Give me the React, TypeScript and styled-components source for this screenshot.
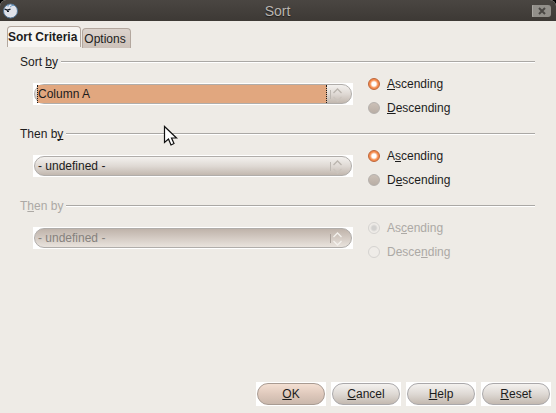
import React, { type ReactNode } from "react";
import styled, { createGlobalStyle, css } from "styled-components";

const GlobalStyle = createGlobalStyle`
  * { box-sizing: border-box; }
  body {
    margin: 0;
    background: #000;
    color: #1c1c1c;
    font: 12px/16px "Liberation Sans", Arial, sans-serif;
  }
`;

const Dialog = styled.div`
  position: relative;
  display: flex;
  flex-direction: column;
  min-height: 100vh;
  background: #eeebe6;
  border-radius: 6px 6px 0 0;
  overflow: hidden;
`;

const TitleBar = styled.header`
  display: grid;
  grid-template-columns: 20px 1fr 20px;
  align-items: center;
  height: 21px;
  padding: 0 4px 0 3px;
  background: linear-gradient(#4a4642, #3d3935);
`;

const Title = styled.h1`
  margin: 0;
  text-align: center;
  font-size: 14px;
  line-height: 20px;
  font-weight: normal;
  color: #b9b5b0;
  text-shadow: 0 1px 1px #1d1b19;
  padding-top: 1px;
`;

const AppIcon = styled.svg`
  width: 16px;
  height: 16px;
`;

const CloseButton = styled.button`
  width: 19px;
  height: 12px;
  padding: 0;
  border: 0;
  border-radius: 1px 3px 3px 1px;
  background: #928f8a;
  box-shadow: inset 1px 0 #aaa7a2;
  display: grid;
  place-items: center;
`;

const Tabs = styled.div`
  display: flex;
  align-items: flex-start;
  gap: 1px;
  padding: 5px 7px 0;
`;

const Tab = styled.button<{ $active?: boolean }>`
  height: 20px;
  margin: 2px 0 0;
  padding: 0 4px 0 1px;
  border: 1px solid #b3a79e;
  border-bottom: 0;
  border-radius: 4px 4px 0 0;
  font: inherit;
  white-space: nowrap;
  color: #1c1c1c;
  background: linear-gradient(#dcd3cc, #cdc2ba);
  ${(p) =>
    p.$active &&
    css`
      height: 21px;
      margin: 0;
      padding: 0 3px 0 0;
      font-weight: bold;
      background: #f7f5f2;
    `}
`;

const Panel = styled.main`
  display: flex;
  flex-direction: column;
  padding: 6px 21px 12px 20px;
`;

const Group = styled.fieldset<{ $off?: boolean }>`
  min-width: 0;
  height: 72px;
  margin: 0;
  padding: 0;
  border: 0;
  color: ${(p) => (p.$off ? "#aca9a5" : "#1c1c1c")};
`;

const Legend = styled.legend`
  display: flex;
  align-items: center;
  gap: 3px;
  width: 100%;
  padding: 0;
  white-space: nowrap;

  &::after {
    content: "";
    flex: 1;
    height: 2px;
    background: linear-gradient(#aaa8a5 50%, #fff 50%);
  }
`;

const Key = styled.span`
  text-decoration: underline 1px;
  text-decoration-skip-ink: none;
  text-underline-offset: 1px;
`;

const Fields = styled.div`
  display: grid;
  grid-template-columns: minmax(0, 320px) 1fr;
  gap: 15px;
  padding: 13px 0 0 13px;
`;

const SelectBox = styled.div`
  position: relative;
  height: 22px;
  background: #fff;
  padding: 1px;
`;

const SelectArrow = styled.svg`
  position: absolute;
  right: 9px;
  top: 2px;
  width: 15px;
  height: 18px;
  pointer-events: none;
`;

const Select = styled.select`
  appearance: none;
  display: block;
  width: 100%;
  height: 20px;
  margin: 0;
  padding: 0 28px 0 3px;
  border: 1px solid #b0adaa;
  border-radius: 10px;
  outline: 0;
  font: inherit;
  color: #1c1c1c;
  background: linear-gradient(#f3f1ee, #dfd9d4 50%, #c2b8af);

  &:disabled {
    opacity: 1;
    color: #85817d;
    background: linear-gradient(#bfb3aa, #e9e3dd);
  }
`;

const Highlight = styled.span`
  position: absolute;
  top: 2px;
  bottom: 2px;
  left: 4px;
  right: 26px;
  display: flex;
  align-items: center;
  background: #e1a77f;
  border: dotted #1c1c1c;
  border-width: 0 1px;
  pointer-events: none;
`;

const Radios = styled.div`
  display: flex;
  flex-direction: column;
  align-items: flex-start;
  margin-top: -7px;
  gap: 8px;
`;

const RadioLabel = styled.label`
  display: flex;
  align-items: center;
  gap: 7px;
  white-space: nowrap;
`;

const Radio = styled.input`
  appearance: none;
  width: 12px;
  height: 12px;
  margin: 0;
  border: 1px solid #b5b0ac;
  border-radius: 50%;
  background: linear-gradient(#cbc0b7, #b9aea5);

  &:checked {
    border-color: #bd653a;
    background: radial-gradient(circle, #fff 0 2px, #f58a4b 4px);
  }
  &:disabled {
    border-color: #d5d3d0;
    background: #efece8;
  }
  &:disabled:checked {
    background: radial-gradient(circle, #d2d1cf 0 2px, #efece8 4px);
  }
`;

const Footer = styled.footer`
  display: flex;
  justify-content: flex-end;
  gap: 5px;
  margin-top: auto;
  padding: 0 5px 7px;
`;

const ButtonBox = styled.div`
  width: 70px;
  padding: 1px;
  background: #fff;
`;

const Button = styled.button<{ $primary?: boolean }>`
  display: block;
  width: 100%;
  height: 22px;
  padding: 0;
  border: 1px solid ${(p) => (p.$primary ? "#a89b92" : "#aaa8aa")};
  border-radius: 11px;
  font: inherit;
  color: #1c1c1c;
  background: ${(p) =>
    p.$primary
      ? "linear-gradient(#f3dfd2, #dfc9bc 50%, #cab8ac)"
      : "linear-gradient(#f4f2ef, #ded9d4 50%, #c3b9b0)"};
`;

const Pointer = styled.svg`
  position: absolute;
  left: 163px;
  top: 125px;
  width: 15px;
  height: 23px;
  pointer-events: none;
`;

type SortGroupProps = {
  name: string;
  label: string;
  legend: ReactNode;
  value: string;
  ascending: ReactNode;
  descending: ReactNode;
  focused?: boolean;
  disabled?: boolean;
};

function SortGroup({ name, label, legend, value, ascending, descending, focused, disabled }: SortGroupProps) {
  return (
    <Group $off={disabled} disabled={disabled}>
      <Legend><span>{legend}</span></Legend>
      <Fields>
        <SelectBox>
          <Select aria-label={label} defaultValue={value}>
            <option>{value}</option>
          </Select>
          {focused && <Highlight aria-hidden="true">{value}</Highlight>}
          <SelectArrow viewBox="0 0 15 18" fill="none">
            <path d="M1.5 5v9" stroke={disabled ? "#aaa19a" : "#bdb8b2"} />
            <path d="M4.5 8l4-4 4 4" stroke={disabled ? "#f4f1ed" : "#bbb5ae"} strokeWidth="1.3" />
            <path d="M4.5 12l4 4 4-4" stroke={disabled ? "#f4f1ed" : "#cbc4bd"} strokeWidth="1.3" />
          </SelectArrow>
        </SelectBox>
        <Radios>
          <RadioLabel>
            <Radio type="radio" name={name} defaultChecked />
            <span>{ascending}</span>
          </RadioLabel>
          <RadioLabel>
            <Radio type="radio" name={name} />
            <span>{descending}</span>
          </RadioLabel>
        </Radios>
      </Fields>
    </Group>
  );
}

export default function App() {
  return (
    <>
      <GlobalStyle />
      <Dialog role="dialog" aria-label="Sort">
        <TitleBar>
          <AppIcon viewBox="0 0 16 16">
            <circle cx="7.5" cy="8" r="7" fill="#dfe1e9" stroke="#527596" />
            <path d="M4 2.8h2M7 4l2-1.5h2" fill="none" stroke="#6e9bc3" />
            <path d="M1.5 6l3 1.2 3-1" fill="none" stroke="#18202a" strokeWidth="1.3" />
            <path d="M4 8.5h2" stroke="#18202a" />
          </AppIcon>
          <Title>Sort</Title>
          <CloseButton aria-label="Close">
            <svg width="10" height="10" viewBox="0 0 10 10">
              <path d="M2 2l6 6M8 2l-6 6" stroke="#4a4744" strokeWidth="2" />
            </svg>
          </CloseButton>
        </TitleBar>
        <Tabs role="tablist">
          <Tab role="tab" aria-selected="true" $active>Sort Criteria</Tab>
          <Tab role="tab" aria-selected="false">Options</Tab>
        </Tabs>
        <Panel>
          <SortGroup
            name="first" label="Sort by" value="Column A" focused
            legend={<>Sort <Key>b</Key>y</>}
            ascending={<><Key>A</Key>scending</>}
            descending={<><Key>D</Key>escending</>}
          />
          <SortGroup
            name="second" label="Then by" value="- undefined -"
            legend={<>Then b<Key>y</Key></>}
            ascending={<>A<Key>s</Key>cending</>}
            descending={<>D<Key>e</Key>scending</>}
          />
          <SortGroup
            name="third" label="Then by, third key" value="- undefined -" disabled
            legend={<>T<Key>h</Key>en by</>}
            ascending={<>As<Key>c</Key>ending</>}
            descending={<>Desce<Key>n</Key>ding</>}
          />
        </Panel>
        <Footer>
          <ButtonBox><Button $primary><Key>O</Key>K</Button></ButtonBox>
          <ButtonBox><Button><Key>C</Key>ancel</Button></ButtonBox>
          <ButtonBox><Button><Key>H</Key>elp</Button></ButtonBox>
          <ButtonBox><Button><Key>R</Key>eset</Button></ButtonBox>
        </Footer>
        <Pointer viewBox="0 0 15 23" aria-hidden="true">
          <path d="M1.5 1.5v16l4-3.5 2.5 6 3-1.5-2.5-5.5h5z" fill="#fff" stroke="#111" strokeWidth="1.2" />
        </Pointer>
      </Dialog>
    </>
  );
}
